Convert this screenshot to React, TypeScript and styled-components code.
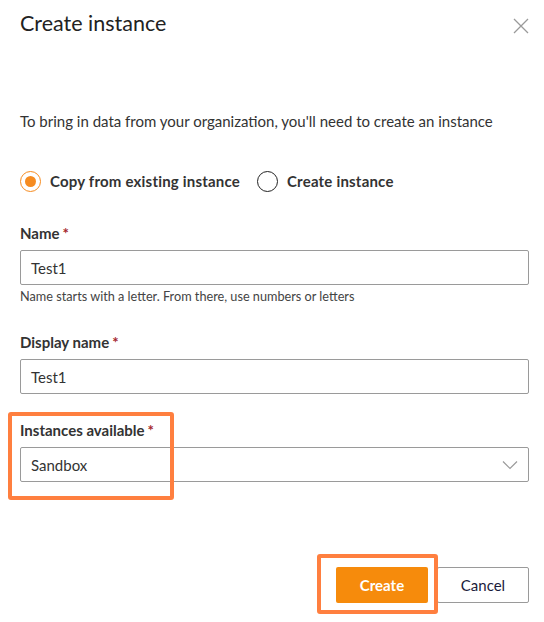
import React from "react";
import styled, { createGlobalStyle } from "styled-components";

const Global = createGlobalStyle`
  html, body { margin: 0; padding: 0; background: #fff; }
  body { font-family: "Lato", "Noto Sans", sans-serif; color: #333; }
  * { box-sizing: border-box; }
`;

const Dialog = styled.div`
  width: 544px;
  height: 622px;
  padding: 8px 16px 0 20px;
  display: flex;
  flex-direction: column;
  background: #fff;
`;

const Header = styled.div`
  display: flex;
  align-items: center;
  justify-content: space-between;
  height: 30px;
`;

const Title = styled.h1`
  margin: 0;
  font-size: 21.5px;
  font-weight: 400;
  line-height: 30px;
  color: #222;
`;

const CloseButton = styled.button`
  border: none;
  background: none;
  padding: 0;
  width: 20px;
  height: 20px;
  display: flex;
  align-items: center;
  justify-content: center;
  margin-top: 6px;
  margin-right: -3px;
  cursor: pointer;
`;

const Description = styled.p`
  margin: 73px 0 0;
  font-size: 15px;
  line-height: 20px;
  color: #333;
`;

const RadioGroup = styled.div`
  display: flex;
  align-items: center;
  gap: 17px;
  margin-top: 40px;
  height: 20px;
`;

const RadioOption = styled.label`
  display: flex;
  align-items: center;
  gap: 9px;
  font-size: 15px;
  font-weight: 700;
  letter-spacing: 0.2px;
  color: #333;
`;

const RadioCircle = styled.span<{ $checked?: boolean }>`
  width: 21px;
  height: 21px;
  border-radius: 50%;
  border: 1.5px solid ${(p) => (p.$checked ? "#f68b1f" : "#222")};
  display: flex;
  align-items: center;
  justify-content: center;
  &::after {
    content: "";
    display: ${(p) => (p.$checked ? "block" : "none")};
    width: 11px;
    height: 11px;
    border-radius: 50%;
    background: #f68b1f;
  }
`;

const Field = styled.div<{ $top: number }>`
  position: relative;
  margin-top: ${(p) => p.$top}px;
  margin-right: -1px;
`;

const Label = styled.div`
  font-size: 15px;
  font-weight: 700;
  line-height: 20px;
  color: #333;
  margin-bottom: 7px;
`;

const Required = styled.span`
  color: #a4262c;
  margin-left: 3px;
`;

const Input = styled.div`
  height: 35px;
  border: 1px solid #9a9a9a;
  border-radius: 2px;
  padding: 0 10px;
  display: flex;
  align-items: center;
  justify-content: space-between;
  font-size: 15px;
  color: #333;
`;

const Hint = styled.div`
  font-size: 12.7px;
  line-height: 16px;
  color: #444;
  margin-top: 3px;
`;

const Highlight = styled.div<{ $l: number; $t: number; $w: number; $h: number }>`
  position: absolute;
  left: ${(p) => p.$l}px;
  top: ${(p) => p.$t}px;
  width: ${(p) => p.$w}px;
  height: ${(p) => p.$h}px;
  border: 4px solid #ff7f3f;
  border-radius: 3px;
  pointer-events: none;
`;

const Footer = styled.div`
  margin-top: auto;
  margin-bottom: 19px;
  margin-right: -1px;
  display: flex;
  justify-content: flex-end;
`;

const ButtonWrap = styled.div`
  position: relative;
  display: flex;
  gap: 9px;
`;

const PrimaryButton = styled.button`
  width: 92px;
  height: 36px;
  border: none;
  border-radius: 2px;
  background: #f68b0c;
  color: #fff;
  font-family: inherit;
  font-size: 15px;
  font-weight: 700;
`;

const SecondaryButton = styled.button`
  width: 92px;
  height: 36px;
  border: 1px solid #9a9a9a;
  border-radius: 2px;
  background: #fff;
  color: #1b1b3b;
  font-family: inherit;
  font-size: 15px;
  font-weight: 400;
`;

export default function App() {
  return (
    <>
      <Global />
      <Dialog>
        <Header>
          <Title>Create instance</Title>
          <CloseButton aria-label="Close">
            <svg width="16" height="16" viewBox="0 0 16 16">
              <path d="M1 1L15 15M15 1L1 15" stroke="#9a9a9a" strokeWidth="1.3" fill="none" />
            </svg>
          </CloseButton>
        </Header>
        <Description>
          To bring in data from your organization, you'll need to create an instance
        </Description>
        <RadioGroup>
          <RadioOption>
            <RadioCircle $checked />
            Copy from existing instance
          </RadioOption>
          <RadioOption>
            <RadioCircle />
            Create instance
          </RadioOption>
        </RadioGroup>
        <Field $top={32}>
          <Label>
            Name<Required>*</Required>
          </Label>
          <Input>Test1</Input>
          <Hint>Name starts with a letter. From there, use numbers or letters</Hint>
        </Field>
        <Field $top={28}>
          <Label>
            Display name<Required>*</Required>
          </Label>
          <Input>Test1</Input>
        </Field>
        <Field $top={26}>
          <Label>
            Instances available<Required>*</Required>
          </Label>
          <Input>
            Sandbox
            <svg width="16" height="10" viewBox="0 0 16 10">
              <path d="M1 1.5L8 8.5L15 1.5" stroke="#9a9a9a" strokeWidth="1.2" fill="none" />
            </svg>
          </Input>
          <Highlight $l={-12} $t={-8} $w={166} $h={88} />
        </Field>
        <Footer>
          <ButtonWrap>
            <PrimaryButton>Create</PrimaryButton>
            <SecondaryButton>Cancel</SecondaryButton>
            <Highlight $l={-19} $t={-13} $w={121} $h={60} />
          </ButtonWrap>
        </Footer>
      </Dialog>
    </>
  );
}
